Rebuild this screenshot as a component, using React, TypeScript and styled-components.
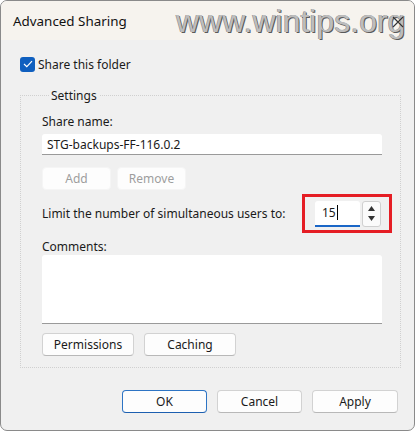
import styled, { createGlobalStyle } from "styled-components";

const GlobalStyle = createGlobalStyle`
  html, body {
    margin: 0;
    padding: 0;
    background: #ffffff;
  }
  * {
    box-sizing: border-box;
  }
`;

const Window = styled.div`
  position: relative;
  width: 415px;
  height: 431px;
  border: 1px solid #8a8a8a;
  border-radius: 7px;
  background: #f0f0f0;
  overflow: hidden;
  font-family: "Noto Sans", "Open Sans", sans-serif;
  font-size: 12px;
  color: #1a1a1a;
  display: flex;
  flex-direction: column;
`;

const TitleBar = styled.div`
  position: relative;
  height: 39px;
  background: #f6f3ee;
  display: flex;
  align-items: center;
  padding-left: 12px;
  font-size: 13.4px;
  color: #111;
`;

const Watermark = styled.div`
  position: absolute;
  left: 175px;
  top: 0;
  line-height: 40px;
  font-family: "Liberation Sans", Arial, sans-serif;
  font-size: 32px;
  color: #bdbdbd;
  text-shadow: 1px 1px 0 #5a5a5a, -0.5px -0.5px 0 #8a8a8a;
  pointer-events: none;
`;

const CloseButton = styled.div`
  position: absolute;
  right: 10px;
  top: 13px;
  width: 12px;
  height: 12px;
`;

const Body = styled.div`
  flex: 1;
  display: flex;
  flex-direction: column;
  padding: 16px 0 0 19px;
`;

const CheckRow = styled.label`
  display: flex;
  align-items: center;
  gap: 3px;
  height: 16px;
`;

const CheckBox = styled.span`
  width: 15px;
  height: 15px;
  border-radius: 3px;
  background: #0f5fbf;
  display: flex;
  align-items: center;
  justify-content: center;
`;

const Group = styled.fieldset`
  margin: 15px 0 0 0;
  width: 381px;
  height: 281px;
  border: 1px dotted #d0d0d0;
  padding: 0 0 0 21px;
  min-width: 0;
`;

const Legend = styled.legend`
  padding: 0 2px;
  margin-left: 7px;
  font-size: 12px;
`;

const Label = styled.div<{ $top: number }>`
  margin-top: ${(p) => p.$top}px;
  line-height: 16px;
`;

const TextBox = styled.div<{ $h: number; $top: number }>`
  margin-top: ${(p) => p.$top}px;
  width: 340px;
  height: ${(p) => p.$h}px;
  background: #fff;
  border-bottom: 1px solid #9a9a9a;
  border-radius: 3px 3px 0 0;
  padding: 2px 5px;
  line-height: 17px;
`;

const Row = styled.div<{ $top: number; $gap: number }>`
  display: flex;
  align-items: center;
  gap: ${(p) => p.$gap}px;
  margin-top: ${(p) => p.$top}px;
`;

const Button = styled.div<{ $w: number; $disabled?: boolean; $default?: boolean }>`
  width: ${(p) => p.$w}px;
  height: 23px;
  display: flex;
  align-items: center;
  justify-content: center;
  background: #fdfdfd;
  border: 1px solid ${(p) => (p.$default ? "#2d74c4" : p.$disabled ? "#f5f5f5" : "#d2d2d2")};
  border-bottom-color: ${(p) => (p.$default ? "#1c5fb0" : p.$disabled ? "#f5f5f5" : "#b8b8b8")};
  border-radius: 4px;
  color: ${(p) => (p.$disabled ? "#9d9d9d" : "#1a1a1a")};
`;

const LimitRow = styled.div`
  display: flex;
  align-items: center;
  margin-top: 4px;
  height: 39px;
`;

const LimitLabel = styled.div`
  width: 260px;
`;

const Highlight = styled.div`
  width: 90px;
  height: 39px;
  border: 3px solid #e51d24;
  display: flex;
  align-items: center;
  padding-left: 10px;
  gap: 2px;
`;

const SpinInput = styled.div`
  width: 45px;
  height: 26px;
  background: #fff;
  border-bottom: 2px solid #1a66c7;
  border-radius: 3px 3px 0 0;
  padding: 4px 0 0 7px;
  display: flex;
  align-items: flex-start;
  line-height: 16px;
`;

const Caret = styled.span`
  display: inline-block;
  width: 1px;
  height: 15px;
  background: #000;
  margin-left: 1px;
`;

const Spinner = styled.div`
  width: 19px;
  height: 26px;
  background: #fbfbfb;
  border: 1px solid #d0d0d0;
  border-radius: 3px;
  display: flex;
  flex-direction: column;
  align-items: center;
  justify-content: space-around;
  padding: 2px 0;
`;

const Footer = styled.div`
  display: flex;
  justify-content: flex-end;
  gap: 10px;
  margin-top: 22px;
  padding-right: 16px;
`;

export default function App() {
  return (
    <>
      <GlobalStyle />
      <Window>
        <TitleBar>
          Advanced Sharing
          <Watermark>www.wintips.org</Watermark>
          <CloseButton>
            <svg width="12" height="12" viewBox="0 0 12 12">
              <path d="M1 1 L11 11 M11 1 L1 11" stroke="#333" strokeWidth="1.1" />
            </svg>
          </CloseButton>
        </TitleBar>
        <Body>
          <CheckRow>
            <CheckBox>
              <svg width="10" height="8" viewBox="0 0 10 8">
                <path d="M1 4 L3.8 6.6 L9 1.2" stroke="#fff" strokeWidth="1.2" fill="none" />
              </svg>
            </CheckBox>
            Share this folder
          </CheckRow>
          <Group>
            <Legend>Settings</Legend>
            <Label $top={10}>Share name:</Label>
            <TextBox $h={21} $top={4}>
              STG-backups-FF-116.0.2
            </TextBox>
            <Row $top={12} $gap={6}>
              <Button $w={69} $disabled>
                Add
              </Button>
              <Button $w={69} $disabled>
                Remove
              </Button>
            </Row>
            <LimitRow>
              <LimitLabel>Limit the number of simultaneous users to:</LimitLabel>
              <Highlight>
                <SpinInput>
                  15
                  <Caret />
                </SpinInput>
                <Spinner>
                  <svg width="7" height="5" viewBox="0 0 7 5">
                    <path d="M0 5 L3.5 0 L7 5 Z" fill="#333" />
                  </svg>
                  <svg width="7" height="5" viewBox="0 0 7 5">
                    <path d="M0 0 L3.5 5 L7 0 Z" fill="#333" />
                  </svg>
                </Spinner>
              </Highlight>
            </LimitRow>
            <Label $top={6}>Comments:</Label>
            <TextBox $h={69} $top={0} />
            <Row $top={9} $gap={10}>
              <Button $w={92}>Permissions</Button>
              <Button $w={92}>Caching</Button>
            </Row>
          </Group>
          <Footer>
            <Button $w={85} $default>
              OK
            </Button>
            <Button $w={85}>Cancel</Button>
            <Button $w={86}>Apply</Button>
          </Footer>
        </Body>
      </Window>
    </>
  );
}
